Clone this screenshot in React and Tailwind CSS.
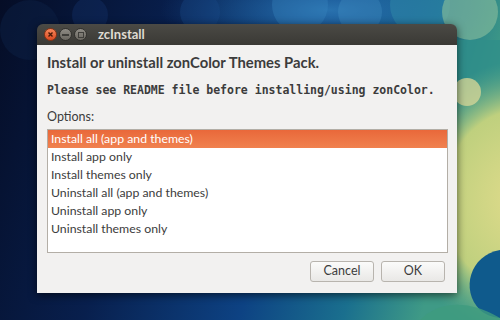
import React from "react";

function Wallpaper() {
  return (
    <svg className="absolute inset-0" width="500" height="320" viewBox="0 0 500 320">
      <defs>
        <linearGradient id="bg" x1="0" y1="0" x2="1" y2="0.2">
          <stop offset="0" stopColor="#050d26" />
          <stop offset="0.35" stopColor="#081f4d" />
          <stop offset="0.65" stopColor="#0d4283" />
          <stop offset="0.85" stopColor="#1a6f8e" />
          <stop offset="1" stopColor="#3f9a86" />
        </linearGradient>
        <radialGradient id="glow" cx="0.5" cy="0.5" r="0.5">
          <stop offset="0" stopColor="#e2dc8c" />
          <stop offset="0.65" stopColor="#bfd07e" />
          <stop offset="1" stopColor="#5aa88a" stopOpacity="0" />
        </radialGradient>
        <radialGradient id="topglow" cx="0.5" cy="0.5" r="0.5">
          <stop offset="0" stopColor="#2c77b3" stopOpacity="0.9" />
          <stop offset="1" stopColor="#1d5fa0" stopOpacity="0" />
        </radialGradient>
      </defs>
      <rect width="500" height="320" fill="url(#bg)" />
      <ellipse cx="330" cy="10" rx="170" ry="45" fill="url(#topglow)" />
      <circle cx="300" cy="5" r="28" fill="#3a86c0" opacity="0.35" />
      <circle cx="360" cy="12" r="22" fill="#4a94c8" opacity="0.3" />
      <circle cx="420" cy="5" r="30" fill="#2f8aa8" opacity="0.5" />
      <circle cx="90" cy="15" r="18" fill="#15336a" opacity="0.4" />
      <circle cx="30" cy="30" r="30" fill="#0b1f44" opacity="0.5" />
      <circle cx="200" cy="12" r="20" fill="#1a4a8a" opacity="0.35" />
      <rect x="457" y="40" width="43" height="120" fill="#2f8f8a" opacity="0.8" />
      <ellipse cx="525" cy="200" rx="125" ry="140" fill="url(#glow)" />
      <circle cx="470" cy="12" r="28" fill="#7fb89a" opacity="0.7" />
      <circle cx="467" cy="92" r="14" fill="#d3d596" opacity="0.8" />
      <path d="M500 250 C 470 255 460 290 480 310 C 490 318 500 318 500 318 Z" fill="#0f5a8c" />
      <path d="M420 320 C 440 300 470 300 500 318 L 500 320 Z" fill="#3f9b7e" opacity="0.8" />
    </svg>
  );
}

export default function App() {
  const items = [
    "Install all (app and themes)",
    "Install app only",
    "Install themes only",
    "Uninstall all (app and themes)",
    "Uninstall app only",
    "Uninstall themes only",
  ];
  const sans = { fontFamily: 'Lato, "Noto Sans", sans-serif' };
  return (
    <div className="relative w-[500px] h-[320px] overflow-hidden" style={sans}>
      <Wallpaper />
      <div className="relative pl-[37px] pt-[24px]">
        <div className="w-[420px] h-[269px] flex flex-col rounded-t-[6px] shadow-[0_2px_8px_rgba(0,0,0,0.6)]">
          <div className="h-[21px] flex items-center rounded-t-[6px] bg-gradient-to-b from-[#4b4a45] to-[#3a3935] px-[7px]">
            <div className="flex items-center gap-[2px]">
              <div className="w-[13px] h-[13px] rounded-full bg-gradient-to-b from-[#f7865a] to-[#d9481f] border border-[#8a3315] flex items-center justify-center">
                <svg width="7" height="7" viewBox="0 0 7 7">
                  <path d="M1.5 1.5 L5.5 5.5 M5.5 1.5 L1.5 5.5" stroke="#4a1a08" strokeWidth="1.4" />
                </svg>
              </div>
              <div className="w-[13px] h-[13px] rounded-full bg-gradient-to-b from-[#8e8b84] to-[#6a6760] border border-[#33322e] flex items-center justify-center">
                <div className="w-[7px] h-[2px] bg-[#3f3e3a]" />
              </div>
              <div className="w-[13px] h-[13px] rounded-full bg-gradient-to-b from-[#8e8b84] to-[#6a6760] border border-[#33322e] flex items-center justify-center">
                <div className="w-[6px] h-[6px] border border-[#3f3e3a]" />
              </div>
            </div>
            <div className="ml-[11px] text-[13px] font-bold text-[#dfdbd2] leading-none">zcInstall</div>
          </div>
          <div className="flex-1 bg-[#f2f1f0] flex flex-col px-[10px] pt-[7px] pb-[10px]">
            <div className="text-[14.8px] font-bold text-[#3c3c3c] leading-[20px]">
              Install or uninstall zonColor Themes Pack.
            </div>
            <div
              className="mt-[10px] text-[11.5px] font-bold text-[#3c3c3c] leading-[16px] whitespace-nowrap"
              style={{ fontFamily: '"DejaVu Sans Mono", "Liberation Mono", monospace' }}
            >
              Please see README file before installing/using zonColor.
            </div>
            <div className="mt-[11px] text-[12.5px] text-[#3c3c3c] leading-[16px]">Options:</div>
            <div className="mt-[4px] h-[124px] w-[401px] bg-white border border-[#b3aea6]">
              {items.map((t, i) => (
                <div
                  key={t}
                  className={
                    i === 0
                      ? "h-[18px] px-[3px] flex items-center text-[12.3px] text-white bg-gradient-to-b from-[#e9683a] to-[#f0814f]"
                      : "h-[18px] px-[3px] flex items-center text-[12.3px] text-[#3c3c3c]"
                  }
                >
                  {t}
                </div>
              ))}
            </div>
            <div className="mt-[8px] flex justify-end gap-[7px] pr-[2px]">
              <button className="w-[64px] h-[21px] rounded-[3px] border border-[#b8b4ae] bg-gradient-to-b from-[#fbfbfa] to-[#e9e8e6] text-[12.5px] text-[#3c3c3c] leading-none">
                Cancel
              </button>
              <button className="w-[64px] h-[21px] rounded-[3px] border border-[#b8b4ae] bg-gradient-to-b from-[#fbfbfa] to-[#e9e8e6] text-[12.5px] text-[#3c3c3c] leading-none">
                OK
              </button>
            </div>
          </div>
        </div>
      </div>
    </div>
  );
}
